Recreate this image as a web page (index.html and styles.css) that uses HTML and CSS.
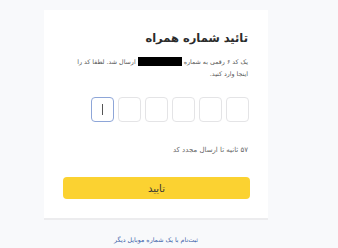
FILE: index.html
```html
<!DOCTYPE html>
<html lang="fa" dir="rtl">
<head>
<meta charset="utf-8">
<link rel="stylesheet" href="styles.css">
</head>
<body>
<div class="page">
  <div class="card">
    <h1 class="title">تائید شماره همراه</h1>
    <p class="desc">یک کد ۶ رقمی به شماره <span class="redact"></span> ارسال شد. لطفا کد را اینجا وارد کنید.</p>
    <div class="otp">
      <div class="box"></div>
      <div class="box"></div>
      <div class="box"></div>
      <div class="box"></div>
      <div class="box"></div>
      <div class="box focus"><span class="caret"></span></div>
    </div>
    <p class="timer">۵۷ ثانیه تا ارسال مجدد کد</p>
    <button class="btn">تایید</button>
  </div>
  <a class="link" href="#">ثبت‌نام با یک شماره موبایل دیگر</a>
</div>
</body>
</html>
```
FILE: styles.css
```css
* { box-sizing: border-box; }
html, body { margin: 0; padding: 0; }
body {
  background: #f8f9fb;
  font-family: "DejaVu Sans", "Noto Sans", sans-serif;
  width: 338px;
  height: 248px;
  overflow: hidden;
}
.page {
  width: 338px;
  display: flex;
  flex-direction: column;
  align-items: flex-start;
}
.card {
  margin-top: 10px;
  margin-right: 70px;
  width: 224px;
  height: 210px;
  background: #fff;
  border-bottom: 2px solid #ececee;
  padding: 18px 18px 0 18px;
  display: flex;
  flex-direction: column;
}
.title {
  margin: 0;
  font-size: 11.5px;
  font-weight: bold;
  color: #2b2b2b;
  line-height: 20px;
  padding-right: 2px;
}
.desc {
  margin: 8px 0 0 0;
  font-size: 6.3px;
  line-height: 12px;
  color: #555;
  padding-right: 2px;
  padding-left: 10px;
}
.redact {
  display: inline-block;
  width: 44px;
  height: 9px;
  background: #000;
  vertical-align: -2px;
}
.otp {
  margin-top: 17px;
  display: flex;
  gap: 4px;
  padding-right: 1px;
}
.box {
  width: 23px;
  height: 25px;
  border: 1px solid #e4e4e6;
  border-radius: 4px;
  display: flex;
  align-items: center;
  justify-content: center;
}
.box.focus {
  border: 1.5px solid #8ea6d8;
}
.caret {
  width: 1.5px;
  height: 11px;
  background: #555;
}
.timer {
  margin: 23px 0 0 0;
  font-size: 7px;
  line-height: 10px;
  color: #666;
  padding-right: 2px;
}
.btn {
  margin-top: 22px;
  width: 187px;
  height: 22px;
  border: none;
  border-radius: 4px;
  background: #fbd231;
  font-family: inherit;
  font-size: 10px;
  color: #333;
  padding: 0;
}
.link {
  display: block;
  margin-top: 15px;
  margin-right: 70px;
  width: 224px;
  text-align: center;
  line-height: 10px;
  font-size: 6.3px;
  color: #3a5ea8;
  text-decoration: none;
}
```
